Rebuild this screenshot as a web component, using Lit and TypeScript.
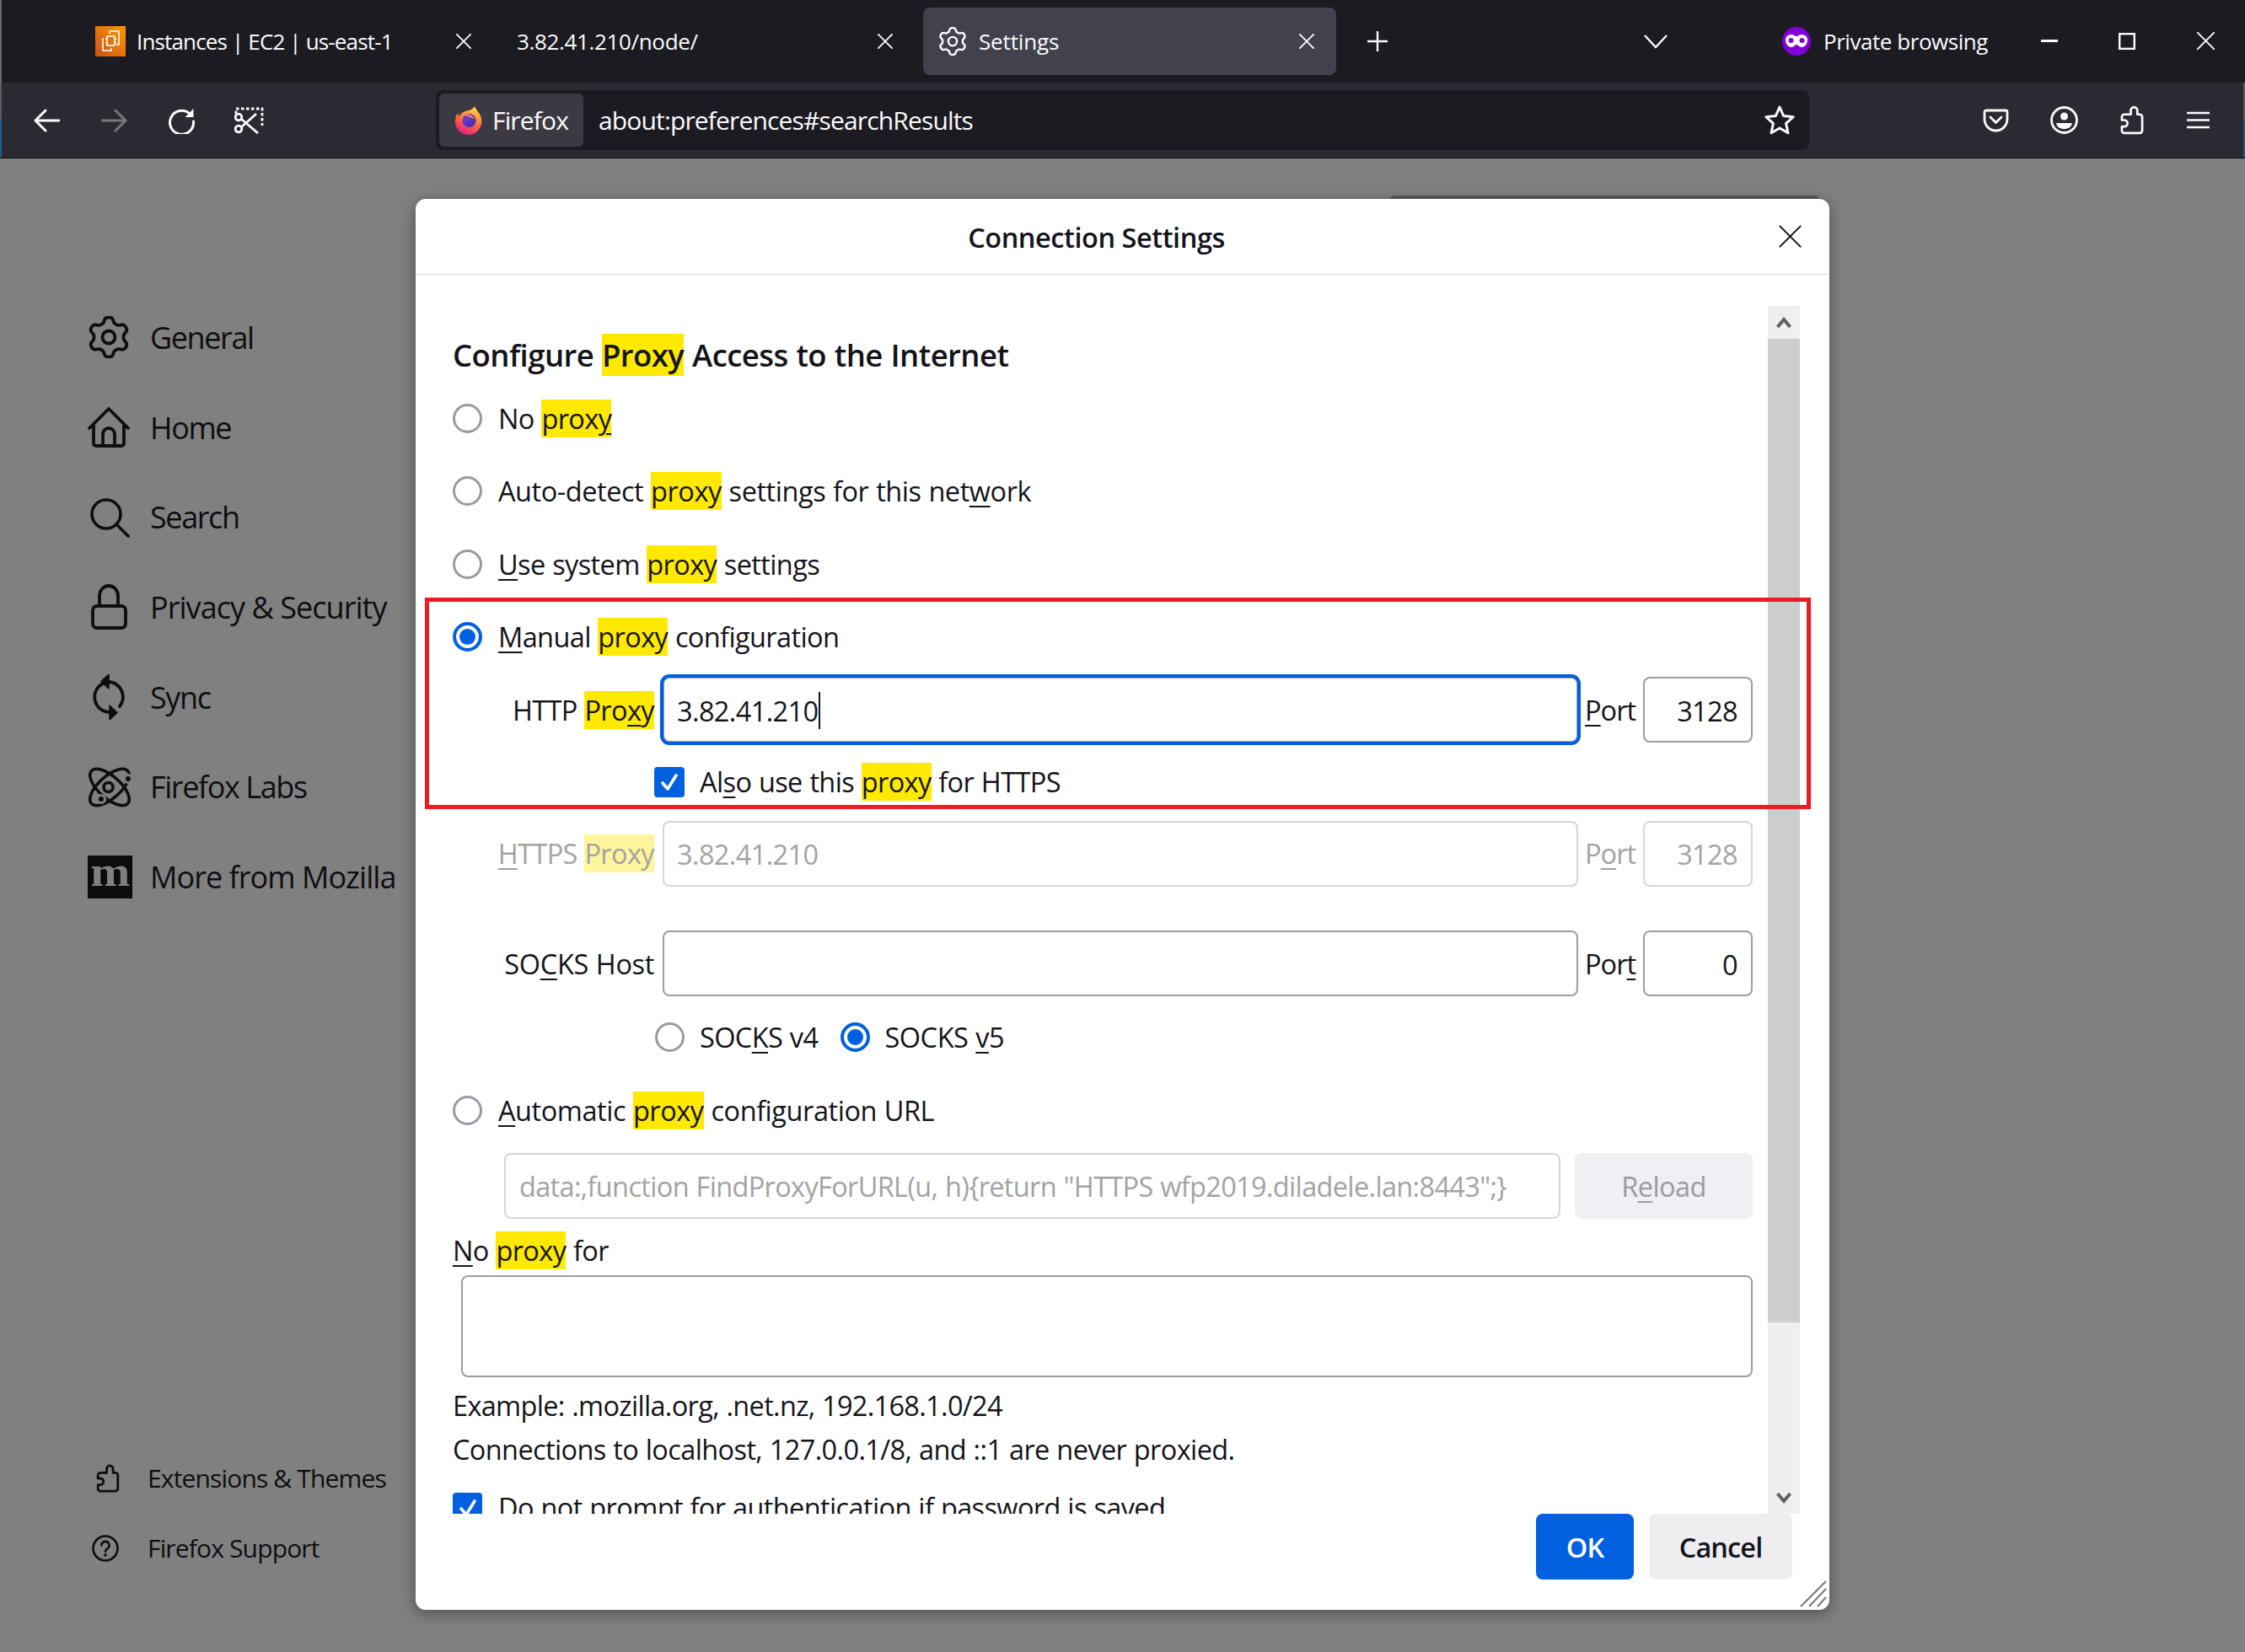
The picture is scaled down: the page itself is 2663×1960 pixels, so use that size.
import { LitElement, html, css, svg } from "lit";
import { customElement } from "lit/decorators.js";

function gear(cx: number, cy: number, R: number, a: number): string {
  let d = "";
  for (let i = 0; i <= 144; i++) {
    const t = (i / 144) * Math.PI * 2;
    const c = Math.cos(6 * t);
    const r = R + a * Math.tanh(c * 1.6) / Math.tanh(1.6);
    d += (i ? "L" : "M") + (cx + r * Math.sin(t)).toFixed(2) + " " + (cy - r * Math.cos(t)).toFixed(2);
  }
  return d + "Z";
}
function star(cx: number, cy: number, R: number, r: number): string {
  let p = "";
  for (let i = 0; i < 10; i++) {
    const t = (i / 10) * Math.PI * 2;
    const q = i % 2 ? r : R;
    p += (cx + q * Math.sin(t)).toFixed(2) + "," + (cy - q * Math.cos(t)).toFixed(2) + " ";
  }
  return p;
}
const puzzle = "M13 6a4 4 0 0 1 8 0V11h3a3 3 0 0 1 3 3V31a3 3 0 0 1-3 3H5a3 3 0 0 1-3-3V26h3a4 4 0 0 0 0-8H2V14a3 3 0 0 1 3-3H13Z";
const gearIcon = (size: number, sw: number) => html`<svg width=${size} height=${size} viewBox="0 0 50 50" fill="none" stroke="currentColor" stroke-width=${sw}><path d=${gear(25, 25, 20.5, 3)} stroke-linejoin="round"/><circle cx="25" cy="25" r="7.5"/></svg>`;
const xIcon = (size: number, sw: number) => html`<svg width=${size} height=${size} viewBox="0 0 20 20" stroke="currentColor" stroke-width=${sw} stroke-linecap="round"><path d="M1 1L19 19M19 1L1 19"/></svg>`;

@customElement("app-root")
export class AppRoot extends LitElement {
  static styles = css`
    :host { display: block; position: relative; width: 2663px; height: 1960px; overflow: hidden; background: #808080; font-family: "Open Sans", "Noto Sans", sans-serif; color: #15141a; }
    svg { display: block; flex: none; }
    .page { display: flex; flex-direction: column; height: 1960px; }

    .strip { display: flex; align-items: flex-start; height: 98px; background: #1c1b22; color: #fbfbfe; padding: 9px 0 0 95px; gap: 10px; box-sizing: border-box; border-left: 2px solid #6b6b6b; }
    .tab { width: 490px; height: 80px; flex: none; display: flex; align-items: center; box-sizing: border-box; padding: 0 26px 0 18px; border-radius: 8px; font-size: 26px; letter-spacing: -0.35px; gap: 13px; }
    .tab:first-child { margin-left: -2px; letter-spacing: -0.85px; }
    .tab.active { background: #42414d; gap: 14px; letter-spacing: -0.15px; }
    .tab .title { flex: 1; white-space: nowrap; }
    .fav { width: 36px; height: 36px; flex: none; }
    .newtab { margin: 28px 0 0 27px; }
    .chev { margin: 31px 0 0 294px; }
    .private { display: flex; align-items: center; gap: 15px; margin: 0 0 0 126px; height: 80px; font-size: 26px; letter-spacing: -0.45px; white-space: nowrap; }
    .min { margin: 38px 0 0 53px; }
    .max { margin: 30px 0 0 62px; }
    .wclose { margin: 29px 0 0 63px; }

    .toolbar { display: flex; align-items: center; height: 90px; box-sizing: border-box; padding-left: 42px; color: #fbfbfe; border-bottom: 1px solid #0c0c0d;
      background: linear-gradient(#5c5c5c 50%, #1f5a8c 50%) left / 2px 100% no-repeat, linear-gradient(#5c5c5c 50%, #1f5a8c 50%) right / 2px 100% no-repeat, #2b2a33; }
    .tb-back { margin-left: -2px; }
    .forward { color: #77767c; margin-left: 49px; }
    .reload { margin-left: 49px; }
    .shot { margin-left: 47px; }
    .urlbar { margin-left: 204px; width: 1629px; height: 71px; background: #1c1b22; border-radius: 8px; display: flex; align-items: center; box-sizing: border-box; padding: 0 17px 0 4px; font-size: 30px; letter-spacing: -0.85px; }
    .identity { display: flex; align-items: center; gap: 12px; background: #3b3a42; height: 63px; width: 171px; border-radius: 6px; box-sizing: border-box; padding-left: 19px; white-space: nowrap; }
    .url { flex: 1; margin-left: 18px; white-space: nowrap; }
    .pocket { margin-left: 206px; }
    .acct { margin-left: 49px; }
    .ext { margin-left: 50px; }
    .menu { margin-left: 51px; }

    .main { flex: 1; display: flex; flex-direction: column; padding-top: 159px; padding-bottom: 82px; box-sizing: border-box; color: #0e0e11; min-height: 0; }
    .cat { display: flex; align-items: center; height: 106.7px; padding-left: 104px; font-size: 36px; letter-spacing: -0.95px; white-space: nowrap; }
    .cat.n { letter-spacing: -1.4px; }
    .cat .ic { width: 74px; flex: none; display: flex; }
    .mbox { width: 53px; height: 51px; background: #0c0c0d; color: #808080; font-family: "Liberation Serif", serif; font-weight: 700; font-size: 50px; line-height: 51px; letter-spacing: 0; display: flex; justify-content: center; }
    .mbox span { display: block; transform: translateY(-6px) scaleX(1.13); }
    .spacer { flex: 1; }
    .foot { display: flex; align-items: center; height: 83px; padding-left: 106px; font-size: 30px; letter-spacing: -0.85px; white-space: nowrap; }
    .foot .ic { width: 69px; flex: none; display: flex; }
    .ic-p { margin-left: 7px; }
    .ic-h { margin-left: 3px; }

    .under { position: absolute; left: 1647px; top: 232px; width: 513px; height: 14px; background: #5a5a5a; border-radius: 8px 8px 0 0; }
    .dialog { position: absolute; left: 493px; top: 236px; width: 1677px; height: 1674px; background: #fff; border-radius: 12px; box-shadow: 0 4px 18px rgba(0,0,0,0.4); display: flex; flex-direction: column; overflow: hidden; }
    .dhead { height: 90px; flex: none; border-bottom: 1px solid #d9d9df; box-sizing: border-box; display: flex; align-items: center; justify-content: center; font-size: 32.5px; font-weight: 600; letter-spacing: -0.45px; position: relative; padding-right: 62px; padding-top: 2px; }
    .dx { position: absolute; right: 33px; top: 31px; }
    .dbody { flex: none; height: 1470px; display: flex; }
    .content { width: 1604px; flex: none; padding-left: 44px; padding-right: 18px; box-sizing: border-box; overflow: hidden; font-size: 32.5px; letter-spacing: -0.62px; word-spacing: 0.8px; white-space: nowrap; }
    h2 { margin: 72px 0 9px; height: 46px; line-height: 46px; font-size: 36.5px; font-weight: 600; letter-spacing: -0.55px; }
    mark { background: #ffe900; color: inherit; }
    u { text-decoration-thickness: 2px; text-underline-offset: 5px; }
    .wide { letter-spacing: -0.45px; }
    .tight { letter-spacing: -0.68px; }

    .radio-row { display: flex; align-items: center; height: 86.5px; }
    .radio { width: 35px; height: 35px; border: 3.5px solid #9a99a4; border-radius: 50%; box-sizing: border-box; flex: none; margin-right: 19px; display: flex; align-items: center; justify-content: center; }
    .radio.on { border: 4px solid #0060df; }
    .radio.on::after { content: ""; width: 19px; height: 19px; background: #0060df; border-radius: 50%; }
    .check { width: 36px; height: 36px; background: #0060df; border-radius: 4px; flex: none; margin-right: 18px; display: flex; align-items: center; justify-content: center; }

    .frow { display: flex; align-items: center; }
    .lbl { width: 239px; text-align: right; flex: none; margin-right: 10px; }
    .lbl.w { letter-spacing: -0.35px; }
    .field { height: 78px; border: 2px solid #9d9d9d; border-radius: 8px; box-sizing: border-box; display: flex; align-items: center; padding: 2px 16px 0 15px; background: #fff; }
    .grow { flex: 1; }
    .plabel { width: 77px; flex: none; box-sizing: border-box; padding-left: 8px; letter-spacing: -0.95px; }
    .port { width: 130px; flex: none; justify-content: flex-end; }
    .focus { outline: 4px solid #0060df; outline-offset: -1px; }
    .caret { display: inline-block; width: 2px; height: 44px; background: #15141a; flex: none; margin-left: 1px; }
    .dim { color: #a3a3a3; }
    .dim mark { background: #fff59c; }
    .dim.field, .field.dim { border-color: #d6d6d6; }

    .r-http { height: 86px; }
    .r-also { height: 85px; padding-left: 239px; display: flex; align-items: center; }
    .r-https { height: 85px; }
    .r-socks { height: 85px; margin-top: 45.5px; }
    .r-ver { height: 90px; display: flex; align-items: center; padding-left: 240px; }
    .radio.mid { margin-right: 18px; }
    .radio.on.mid { margin-right: 17px; }
    .ver-a { margin-right: 27px; }
    .radio-row.auto { height: 84px; }
    .r-url { height: 78px; margin-top: 8px; display: flex; padding-left: 61px; }
    .r-url .field { padding-left: 16px; letter-spacing: -0.66px; }
    .reload-btn { width: 211px; height: 78px; background: #f0f0f4; border-radius: 8px; margin-left: 17px; color: #9b9ba1; display: flex; align-items: center; justify-content: center; flex: none; padding-top: 2px; box-sizing: border-box; }
    .nofor { height: 58px; padding-top: 9px; line-height: 58px; }
    .area { height: 121px; margin-left: 10px; border: 2px solid #9d9d9d; border-radius: 8px; box-sizing: border-box; }
    .ex { height: 67px; line-height: 67px; }
    .conn { height: 38px; line-height: 38px; }
    .prompt { height: 100px; display: flex; align-items: center; }
    .check.sm { width: 35px; height: 35px; margin-right: 19px; }

    .sbar { width: 38px; flex: none; margin-top: 37px; background: #efefef; display: flex; flex-direction: column; align-items: center; color: #606060; }
    .sb-up { height: 39px; flex: none; display: flex; align-items: center; }
    .thumb { height: 1167px; width: 100%; background: #cdcdcd; flex: none; }
    .sb-down { margin-top: auto; height: 26px; flex: none; display: flex; align-items: flex-start; }

    .dfoot { flex: 1; display: flex; justify-content: flex-end; gap: 18px; padding-right: 44px; align-items: flex-start; font-size: 32.5px; }
    .btn { height: 78px; border-radius: 8px; display: flex; align-items: center; justify-content: center; font-weight: 600; letter-spacing: -0.9px; }
    .ok { width: 116px; background: #0060df; color: #fff; }
    .cancel { width: 170px; background: #eeeef0; }
    .grip { position: absolute; right: 3px; bottom: 3px; }

    .annot { position: absolute; left: 504px; top: 709px; width: 1644px; height: 251px; border: 5px solid #ed1c24; box-sizing: border-box; pointer-events: none; }
  `;

  render() {
    return html`
      <div class="page">
        <div class="strip">
          <div class="tab">
            <svg class="fav" viewBox="0 0 36 36"><defs><linearGradient id="aws" x1="0" y1="1" x2="1" y2="0"><stop offset="0" stop-color="#c8511b"/><stop offset="1" stop-color="#ff9900"/></linearGradient></defs><rect width="36" height="36" fill="url(#aws)"/><g fill="none" stroke="#fff" stroke-width="1.6"><rect x="14" y="12" width="9" height="11"/><path d="M9 14V29H19V26M17 9V6H28V22H25"/><path d="M12 15h2M12 20h2M23 15h2M23 20h2"/></g></svg>
            <span class="title">Instances | EC2 | us-east-1</span>${xIcon(18, 2)}
          </div>
          <div class="tab"><span class="title">3.82.41.210/node/</span>${xIcon(18, 2)}</div>
          <div class="tab active">${gearIcon(34, 3.6)}<span class="title">Settings</span>${xIcon(18, 2)}</div>
          <svg class="newtab" width="24" height="24" viewBox="0 0 24 24" stroke="#fbfbfe" stroke-width="2.4"><path d="M12 0V24M0 12H24"/></svg>
          <svg class="chev" width="28" height="18" viewBox="0 0 28 18" fill="none" stroke="#fbfbfe" stroke-width="2.4"><path d="M1 2L14 16L27 2"/></svg>
          <div class="private">
            <svg width="34" height="34" viewBox="0 0 34 34"><ellipse cx="17" cy="17" rx="17" ry="17" fill="#8000d7"/><path d="M4 15c0-4 4-6 7-6 3 0 4 2 6 2s3-2 6-2c3 0 7 2 7 6 0 6-4 9-7 9-3 0-4-3-6-3s-3 3-6 3c-3 0-7-3-7-9Z" fill="#fff"/><circle cx="10.5" cy="16" r="3" fill="#8000d7"/><circle cx="23.5" cy="16" r="3" fill="#8000d7"/></svg>
            <span>Private browsing</span>
          </div>
          <svg class="min" width="20" height="3"><rect width="20" height="3" fill="#fbfbfe"/></svg>
          <svg class="max" width="20" height="20" viewBox="0 0 20 20" fill="none" stroke="#fbfbfe" stroke-width="2.4"><rect x="1.2" y="1.2" width="17.6" height="17.6"/></svg>
          <svg class="wclose" width="21" height="21" viewBox="0 0 20 20" stroke="#fbfbfe" stroke-width="1.8"><path d="M0 0L20 20M20 0L0 20"/></svg>
        </div>

        <div class="toolbar">
          <svg class="tb-back" width="31" height="28" viewBox="0 0 31 28" fill="none" stroke="currentColor" stroke-width="3" stroke-linecap="round" stroke-linejoin="round"><path d="M14 2L2 14L14 26M2 14H30"/></svg>
          <svg class="forward" width="31" height="28" viewBox="0 0 31 28" fill="none" stroke="currentColor" stroke-width="3" stroke-linecap="round" stroke-linejoin="round"><path d="M17 2L29 14L17 26M29 14H1"/></svg>
          <svg class="reload" width="31" height="32" viewBox="0 0 31 32" fill="none" stroke="currentColor" stroke-width="3"><path d="M25 8A14 14 0 1 0 29.5 17" stroke-linecap="round"/><path d="M29.5 2V12H19.5Z" fill="currentColor" stroke="none"/></svg>
          <svg class="shot" width="35" height="32" viewBox="0 0 35 32" fill="none" stroke="currentColor" stroke-width="2.8"><path d="M2 8V2H33V22" stroke-dasharray="3.500 2.500"/><circle cx="5" cy="26" r="3.800"/><circle cx="5" cy="12" r="3.800"/><path d="M8 14L28 31M8 24L26 8"/></svg>
          <div class="urlbar">
            <div class="identity">
              <svg width="32" height="34" viewBox="0 0 32 34"><defs><linearGradient id="ffa" x1="0.7" y1="0" x2="0.3" y2="1"><stop offset="0" stop-color="#ffde44"/><stop offset="0.5" stop-color="#ff7139"/><stop offset="1" stop-color="#e31587"/></linearGradient><linearGradient id="ffb" x1="0.2" y1="0" x2="0.8" y2="1"><stop offset="0" stop-color="#7b3fe0"/><stop offset="1" stop-color="#3a2ba8"/></linearGradient></defs><path d="M23 0c1 4 7 8 8 15 2 10-6 19-15 19C7 34 0 27 0 18 0 14 1 11 3 8c0 2 1 3 2 4 1-3 4-5 7-6 4-1 9-2 11-6Z" fill="url(#ffa)"/><circle cx="16.5" cy="17" r="8" fill="url(#ffb)"/><path d="M9 10c5-1 12 0 14 6-3-3-8-4-14-6Z" fill="#ff9640"/></svg>
              <span>Firefox</span>
            </div>
            <span class="url">about:preferences#searchResults</span>
            <svg width="36" height="35" viewBox="0 0 36 35" fill="none" stroke="currentColor" stroke-width="3" stroke-linejoin="round"><polygon points=${star(18, 19, 17, 8)}/></svg>
          </div>
          <svg class="pocket" width="31" height="28" viewBox="0 0 31 28" fill="none" stroke="currentColor" stroke-width="2.8" stroke-linecap="round" stroke-linejoin="round"><path d="M4 2H27a2 2 0 0 1 2 2V12C29 21 22 26 15.5 26C9 26 2 21 2 12V4a2 2 0 0 1 2-2Z"/><path d="M9 10l6.500 6.500L22 10"/></svg>
          <svg class="acct" width="33" height="33" viewBox="0 0 33 33" fill="none" stroke="currentColor" stroke-width="2.8"><circle cx="16.500" cy="16.500" r="15"/><circle cx="16.500" cy="12" r="4.500" fill="currentColor" stroke="none"/><path d="M7 20H26C25 25 21 27 16.500 27C12 27 8 25 7 20Z" fill="currentColor" stroke="none"/></svg>
          <svg class="ext" width="28" height="35" viewBox="0 0 29 36" fill="none" stroke="currentColor" stroke-width="2.8" stroke-linejoin="round"><path d=${puzzle}/></svg>
          <svg class="menu" width="27" height="21" viewBox="0 0 27 21" stroke="currentColor" stroke-width="2.600"><path d="M0 2H27M0 10.500H27M0 19H27"/></svg>
        </div>

        <div class="main">
          <div class="cat n"><span class="ic">${gearIcon(50, 3.8)}</span>General</div>
          <div class="cat n"><span class="ic"><svg width="50" height="50" viewBox="0 0 50 50" fill="none" stroke="currentColor" stroke-width="3.800" stroke-linejoin="round" stroke-linecap="round"><path d="M2 26L25 3L48 26"/><path d="M7 23V44a3 3 0 0 0 3 3H40a3 3 0 0 0 3-3V23"/><path d="M18 46V33a6 6 0 0 1 14 0V46"/></svg></span>Home</div>
          <div class="cat n"><span class="ic"><svg width="50" height="50" viewBox="0 0 50 50" fill="none" stroke="currentColor" stroke-width="3.600" stroke-linecap="round"><circle cx="22" cy="21" r="17"/><path d="M34 33L48 47"/></svg></span>Search</div>
          <div class="cat"><span class="ic"><svg width="50" height="54" viewBox="0 0 50 54" fill="none" stroke="currentColor" stroke-width="3.800"><path d="M14 26V14a11 12 0 0 1 22 0V26"/><rect x="6" y="26" width="39" height="26" rx="5"/></svg></span>Privacy &amp; Security</div>
          <div class="cat n"><span class="ic"><svg width="50" height="54" viewBox="0 0 50 54" fill="none" stroke="currentColor" stroke-width="3.800" stroke-linecap="round"><path d="M25 9A18 18 0 0 1 38 38"/><path d="M26 45A18 18 0 0 1 18 11"/><path d="M25 0V17L16 8.500Z" fill="currentColor" stroke="currentColor" stroke-width="1.500" stroke-linejoin="round"/><path d="M26 37V54L35 45.500Z" fill="currentColor" stroke="currentColor" stroke-width="1.500" stroke-linejoin="round"/></svg></span>Sync</div>
          <div class="cat n"><span class="ic"><svg width="52" height="50" viewBox="0 0 52 50" fill="none" stroke="currentColor" stroke-width="3.600"><ellipse cx="26" cy="25" rx="29" ry="13" transform="rotate(42 26 25)"/><ellipse cx="26" cy="25" rx="29" ry="13" transform="rotate(-42 26 25)"/><circle cx="24.500" cy="25" r="5.500"/><circle cx="48" cy="15" r="6" fill="#808080" stroke="none"/><circle cx="16" cy="39" r="6" fill="#808080" stroke="none"/><circle cx="48" cy="15" r="3" fill="currentColor" stroke="none"/><circle cx="16" cy="39" r="3" fill="currentColor" stroke="none"/></svg></span>Firefox Labs</div>
          <div class="cat"><span class="ic"><div class="mbox"><span>m</span></div></span>More from Mozilla</div>
          <div class="spacer"></div>
          <div class="foot"><span class="ic"><svg class="ic-p" width="30" height="34" viewBox="0 0 29 36" fill="none" stroke="currentColor" stroke-width="3" stroke-linejoin="round"><path d=${puzzle}/></svg></span>Extensions &amp; Themes</div>
          <div class="foot"><span class="ic"><svg class="ic-h" width="32" height="32" viewBox="0 0 32 32" fill="none" stroke="currentColor" stroke-width="2.600"><circle cx="16" cy="16" r="14.500"/><path d="M11.500 12.500a4.500 4.500 0 1 1 6.800 3.800c-1.500 1-2.300 1.700-2.300 3.500" stroke-linecap="round"/><circle cx="16" cy="24" r="1.800" fill="currentColor" stroke="none"/></svg></span>Firefox Support</div>
        </div>
      </div>

      <div class="under"></div>
      <div class="dialog">
        <div class="dhead">Connection Settings<span class="dx">${xIcon(27, 1.5)}</span></div>
        <div class="dbody">
          <div class="content">
            <h2>Configure <mark>Proxy</mark> Access to the Internet</h2>
            <div class="radio-row"><span class="radio"></span><span>No <mark>prox<u>y</u></mark></span></div>
            <div class="radio-row"><span class="radio"></span><span class="wide">Auto-detect <mark>proxy</mark> settings for this net<u>w</u>ork</span></div>
            <div class="radio-row"><span class="radio"></span><span><u>U</u>se system <mark>proxy</mark> settings</span></div>
            <div class="radio-row"><span class="radio on"></span><span><u>M</u>anual <mark>proxy</mark> configuration</span></div>

            <div class="frow r-http">
              <span class="lbl">HTTP <mark>Pro<u>x</u>y</mark></span>
              <div class="field grow focus">3.82.41.210<span class="caret"></span></div>
              <span class="plabel"><u>P</u>ort</span>
              <div class="field port">3128</div>
            </div>
            <div class="r-also">
              <span class="check"><svg width="24" height="24" viewBox="0 0 24 24" fill="none" stroke="#fff" stroke-width="3.600" stroke-linecap="round" stroke-linejoin="round"><path d="M4 13L10 20L20 4"/></svg></span>
              <span>Al<u>s</u>o use this <mark>proxy</mark> for HTTPS</span>
            </div>
            <div class="frow r-https dim">
              <span class="lbl"><u>H</u>TTPS <mark>Proxy</mark></span>
              <div class="field grow dim">3.82.41.210</div>
              <span class="plabel">P<u>o</u>rt</span>
              <div class="field port dim">3128</div>
            </div>
            <div class="frow r-socks">
              <span class="lbl w">SO<u>C</u>KS Host</span>
              <div class="field grow"></div>
              <span class="plabel">Por<u>t</u></span>
              <div class="field port">0</div>
            </div>
            <div class="r-ver">
              <span class="radio mid"></span><span class="ver-a">SOC<u>K</u>S v4</span>
              <span class="radio on mid"></span><span class="wide">SOCKS <u>v</u>5</span>
            </div>
            <div class="radio-row auto"><span class="radio"></span><span class="wide"><u>A</u>utomatic <mark>proxy</mark> configuration URL</span></div>
            <div class="r-url">
              <div class="field grow dim">data:,function FindProxyForURL(u, h){return "HTTPS wfp2019.diladele.lan:8443";}</div>
              <div class="reload-btn">R<u>e</u>load</div>
            </div>
            <div class="nofor"><u>N</u>o <mark>proxy</mark> for</div>
            <div class="area"></div>
            <div class="ex tight">Example: .mozilla.org, .net.nz, 192.168.1.0/24</div>
            <div class="conn">Connections to localhost, 127.0.0.1/8, and ::1 are never proxied.</div>
            <div class="prompt">
              <span class="check sm"><svg width="24" height="24" viewBox="0 0 24 24" fill="none" stroke="#fff" stroke-width="3.600" stroke-linecap="round" stroke-linejoin="round"><path d="M4 13L10 20L20 4"/></svg></span>
              <span>Do not prompt for authentication if password is saved</span>
            </div>
          </div>
          <div class="sbar">
            <div class="sb-up"><svg width="18" height="15" viewBox="0 0 18 15" fill="none" stroke="currentColor" stroke-width="4"><path d="M1.500 13L9 4L16.500 13"/></svg></div>
            <div class="thumb"></div>
            <div class="sb-down"><svg width="18" height="15" viewBox="0 0 18 15" fill="none" stroke="currentColor" stroke-width="4"><path d="M1.500 2L9 11L16.500 2"/></svg></div>
          </div>
        </div>
        <div class="dfoot">
          <div class="btn ok">OK</div>
          <div class="btn cancel">Cancel</div>
        </div>
        <svg class="grip" width="32" height="32" viewBox="0 0 32 32" stroke="#777" stroke-width="2">${svg`<path d="M1 31L31 1M11 31L31 10M21 31L31 20"/>`}</svg>
      </div>
      <div class="annot"></div>
    `;
  }
}
